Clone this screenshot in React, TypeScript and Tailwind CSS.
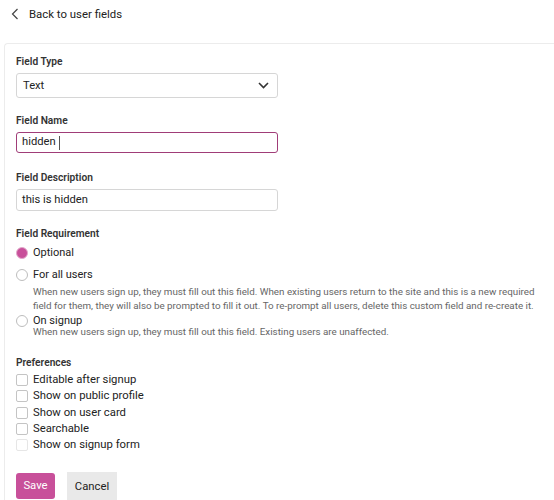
import React from "react";

function Radio({ checked }: { checked?: boolean }) {
  return checked ? (
    <span className="mt-[1.5px] flex h-[12px] w-[12px] shrink-0 items-center justify-center rounded-full border border-[#e2a9cb] bg-[#c8509a]" />
  ) : (
    <span className="mt-[1.5px] h-[12px] w-[12px] shrink-0 rounded-full border border-[#bdbdbd] bg-white" />
  );
}

function Check({ label, faint }: { label: string; faint?: boolean }) {
  return (
    <div className="flex h-[16.3px] items-center">
      <span
        className={`h-[12px] w-[12px] shrink-0 rounded-[2px] border bg-white ${faint ? "border-[#e6e6e6]" : "border-[#c4c4c4]"}`}
      />
      <span className="ml-[5px] text-[11.3px] leading-[16px] text-[#222]">{label}</span>
    </div>
  );
}

export default function App() {
  return (
    <div
      className="h-[500px] w-[554px] overflow-hidden bg-white text-[#222]"
      style={{ fontFamily: "Roboto, 'Liberation Sans', sans-serif" }}
    >
      <div className="flex h-[43px] items-start pl-[11px] pt-[6px]">
        <svg width="8" height="12" viewBox="0 0 8 12" className="mt-[2px]">
          <path d="M6.5 1 L1.5 6 L6.5 11" fill="none" stroke="#444" strokeWidth="1.2" />
        </svg>
        <span className="ml-[10px] text-[11.4px] leading-[16px] text-[#222]">Back to user fields</span>
      </div>
      <div className="ml-[4px] rounded-tl-[4px] border-l border-t border-[#ececec] pl-[11px] pt-[11px]">
        <div className="text-[10.2px] font-semibold leading-[14px] text-[#333]">Field Type</div>
        <div className="mt-[4px] flex h-[25px] w-[262px] items-center justify-between rounded-[3px] border border-[#d6d6d6] pl-[6px] pr-[8px]">
          <span className="mt-[1px] text-[11.2px] text-[#222]">Text</span>
          <svg width="11" height="7" viewBox="0 0 11 7">
            <path d="M1 1 L5.5 5.5 L10 1" fill="none" stroke="#333" strokeWidth="1.6" />
          </svg>
        </div>

        <div className="mt-[16px] text-[10.2px] font-semibold leading-[14px] text-[#333]">Field Name</div>
        <div className="mt-[4px] flex h-[21px] w-[262px] items-center rounded-[3px] border-[1.5px] border-[#a03d78] pl-[5px]">
          <span className="text-[11.2px] text-[#222]">hidden</span>
          <span className="ml-[3px] h-[14px] w-px bg-[#555]" />
        </div>

        <div className="mt-[18px] text-[10.2px] font-semibold leading-[14px] text-[#333]">Field Description</div>
        <div className="mt-[4px] flex h-[22px] w-[262px] items-center rounded-[3px] border border-[#d6d6d6] pl-[5px]">
          <span className="text-[11.2px] text-[#222]">this is hidden</span>
        </div>

        <div className="mt-[16px] text-[10.2px] font-semibold leading-[14px] text-[#333]">Field Requirement</div>
        <div className="mt-[4px] flex items-start">
          <Radio checked />
          <span className="ml-[5px] text-[11px] leading-[15px]">Optional</span>
        </div>
        <div className="mt-[7px] flex items-start">
          <Radio />
          <div className="ml-[5px]">
            <div className="text-[11px] leading-[15px]">For all users</div>
            <div className="mt-[3px] pr-[8px] text-[9.8px] leading-[14px] text-[#666]">
              When new users sign up, they must fill out this field. When existing users return to the site and this is a new required field for them, they will also be prompted to fill it out. To re-prompt all users, delete this custom field and re-create it.
            </div>
          </div>
        </div>
        <div className="mt-0 flex items-start">
          <Radio />
          <div className="ml-[5px]">
            <div className="text-[11px] leading-[15px]">On signup</div>
            <div className="mt-[-3px] text-[9.8px] leading-[14px] text-[#666]">
              When new users sign up, they must fill out this field. Existing users are unaffected.
            </div>
          </div>
        </div>

        <div className="mt-[17px] text-[10.2px] font-semibold leading-[14px] text-[#333]">Preferences</div>
        <div className="mt-[2px] flex flex-col">
          <Check label="Editable after signup" />
          <Check label="Show on public profile" />
          <Check label="Show on user card" />
          <Check label="Searchable" />
          <Check label="Show on signup form" faint />
        </div>

        <div className="mt-[19px] flex items-start gap-[12px]">
          <button className="mt-[1px] h-[26px] w-[39px] rounded-[3px] bg-[#c8509a] text-[11.3px] text-white">Save</button>
          <button className="h-[30px] w-[50px] bg-[#e9e9e9] text-[11.3px] text-[#222]">Cancel</button>
        </div>
      </div>
    </div>
  );
}
